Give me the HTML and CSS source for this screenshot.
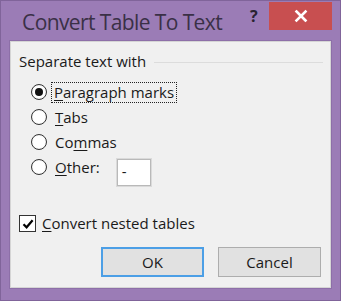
FILE: index.html
```html
<!DOCTYPE html>
<html>
<head>
<meta charset="utf-8">
<link rel="stylesheet" href="styles.css">
</head>
<body>
<div class="window">
  <div class="titlebar">
    <span class="title">Convert Table To Text</span>
    <span class="help">?</span>
    <span class="close">
      <svg width="14" height="14" viewBox="0 0 14 14"><path d="M2.5 2.5 L11.5 11.5 M11.5 2.5 L2.5 11.5" stroke="#fff" stroke-width="2.6" stroke-linecap="square"/></svg>
    </span>
  </div>
  <div class="client">
    <div class="group-head">
      <span class="group-label">Separate text with</span>
      <span class="rule"></span>
    </div>
    <div class="options">
      <div class="opt">
        <span class="radio checked"></span>
        <span class="lbl focus"><u>P</u>aragraph marks</span>
      </div>
      <div class="opt">
        <span class="radio"></span>
        <span class="lbl"><u>T</u>abs</span>
      </div>
      <div class="opt">
        <span class="radio"></span>
        <span class="lbl">Co<u>m</u>mas</span>
      </div>
      <div class="opt">
        <span class="radio"></span>
        <span class="lbl"><u>O</u>ther:</span>
        <span class="textbox">-</span>
      </div>
    </div>
    <div class="check-row">
      <span class="checkbox">
        <svg width="14" height="14" viewBox="0 0 14 14"><path d="M2.5 7.2 L5.6 10.3 L11.6 3.2" fill="none" stroke="#000" stroke-width="2.2"/></svg>
      </span>
      <span class="lbl"><u>C</u>onvert nested tables</span>
    </div>
    <div class="buttons">
      <span class="btn default">OK</span>
      <span class="btn">Cancel</span>
    </div>
  </div>
</div>
</body>
</html>
```
FILE: styles.css
```css
html, body {
  margin: 0;
  padding: 0;
}
body {
  font-family: "Open Sans", "Noto Sans", sans-serif;
  color: #1a1a1a;
}
.window {
  width: 341px;
  height: 301px;
  box-sizing: border-box;
  background: #9b7cb6;
  border: 1px solid #80649a;
  display: flex;
  flex-direction: column;
}
.titlebar {
  height: 40px;
  display: flex;
  align-items: flex-start;
}
.title {
  margin-left: 21px;
  margin-top: 7px;
  font-size: 21px;
  color: #3a3046;
  letter-spacing: -0.6px;
  white-space: nowrap;
}
.help {
  margin-left: 28px;
  margin-top: 4px;
  font-size: 16px;
  font-weight: bold;
  color: #2a2230;
}
.close {
  margin-left: auto;
  margin-top: 1px;
  margin-right: 8px;
  width: 63px;
  height: 28px;
  background: #c84f50;
  display: flex;
  align-items: center;
  justify-content: center;
}
.client {
  margin: 0 9px 0 9px;
  height: 247px;
  box-sizing: border-box;
  background: #f0f0f0;
  border: 1px solid #d5d5d5;
  outline: 1px solid #8d6fa8;
  display: flex;
  flex-direction: column;
  font-size: 15px;
}
.group-head {
  display: flex;
  align-items: center;
  margin: 6px 7px 0 8px;
  height: 26px;
}
.group-label {
  white-space: nowrap;
}
.rule {
  flex: 1;
  height: 1px;
  background: #dcdcdc;
  margin-left: 8px;
  margin-top: 2px;
}
.options {
  display: flex;
  flex-direction: column;
  margin-top: 10px;
  margin-left: 20px;
  gap: 9px;
}
.opt {
  display: flex;
  align-items: center;
  height: 16px;
}
.radio {
  width: 14px;
  height: 14px;
  border: 1px solid #333;
  border-radius: 50%;
  background: #fff;
  box-shadow: inset 0 0 1px #bbb;
  display: flex;
  align-items: center;
  justify-content: center;
  flex: none;
}
.radio.checked::after {
  content: "";
  width: 8px;
  height: 8px;
  border-radius: 50%;
  background: #111;
}
.lbl {
  margin-left: 8px;
  line-height: 19px;
  white-space: nowrap;
}
.lbl u {
  text-decoration-thickness: 1px;
  text-underline-offset: 2px;
}
.focus {
  margin-left: 5px;
  padding: 0 2px;
  outline: 1px dotted #222;
  outline-offset: 0;
}
.textbox {
  margin-left: 17px;
  margin-top: 10px;
  width: 34px;
  height: 27px;
  flex: none;
  box-sizing: border-box;
  border: 1px solid #b9b9b9;
  box-shadow: 0 0 0 1px #dadada;
  background: #fff;
  padding-left: 4px;
  line-height: 23px;
  font-size: 15px;
}
.check-row {
  display: flex;
  align-items: center;
  margin-top: 39px;
  margin-left: 8px;
}
.checkbox {
  width: 15px;
  height: 15px;
  border: 1px solid #333;
  background: #fff;
  display: flex;
  align-items: center;
  justify-content: center;
  flex: none;
}
.check-row .lbl {
  margin-left: 6px;
}
.buttons {
  display: flex;
  justify-content: flex-end;
  gap: 14px;
  margin-top: 14px;
  margin-right: 9px;
}
.btn {
  width: 103px;
  height: 30px;
  box-sizing: border-box;
  background: #e1e1e1;
  border: 1px solid #adadad;
  display: flex;
  align-items: center;
  justify-content: center;
  font-size: 15px;
}
.btn.default {
  border: 2px solid #4c9fe6;
}
```
